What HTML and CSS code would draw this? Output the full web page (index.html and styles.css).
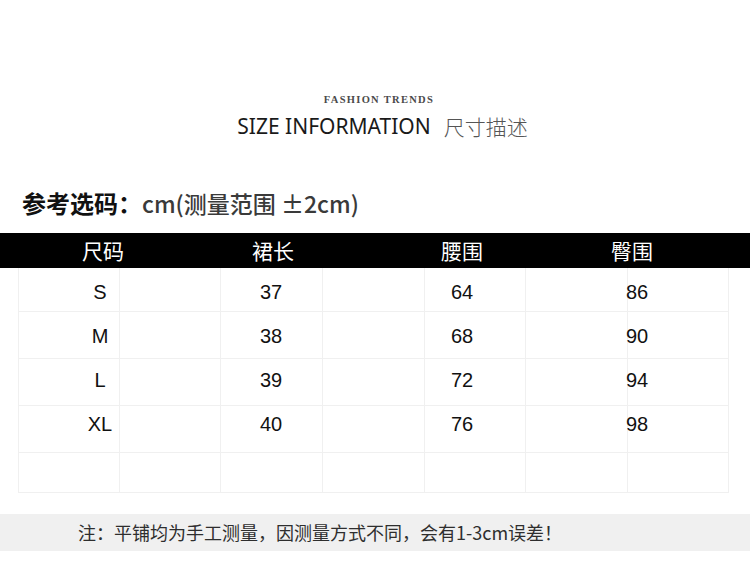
FILE: index.html
```html
<!DOCTYPE html>
<html lang="zh">
<head>
<meta charset="utf-8">
<title>Size Information</title>
<link rel="stylesheet" href="styles.css">
</head>
<body>
<div class="page">
  <div class="title">
    <div class="kicker">FASHION TRENDS</div>
    <div class="heading"><span class="en">SIZE INFORMATION</span><span class="zh">尺寸描述</span></div>
  </div>
  <div class="ref"><span class="ref-strong">参考选码：</span><span class="ref-rest">cm(测量范围 ±2cm)</span></div>
  <div class="bar">
    <div>尺码</div><div>裙长</div><div>腰围</div><div>臀围</div>
  </div>
  <div class="table">
    <div class="lines">
      <div></div><div></div><div></div><div></div><div></div><div></div><div></div>
      <div></div><div></div><div></div><div></div><div></div><div></div><div></div>
      <div></div><div></div><div></div><div></div><div></div><div></div><div></div>
      <div></div><div></div><div></div><div></div><div></div><div></div><div></div>
      <div></div><div></div><div></div><div></div><div></div><div></div><div></div>
    </div>
    <div class="data">
      <div class="row"><div>S</div><div>37</div><div>64</div><div>86</div></div>
      <div class="row"><div>M</div><div>38</div><div>68</div><div>90</div></div>
      <div class="row"><div>L</div><div>39</div><div>72</div><div>94</div></div>
      <div class="row"><div>XL</div><div>40</div><div>76</div><div>98</div></div>
    </div>
  </div>
  <div class="note">注：平铺均为手工测量，因测量方式不同，会有1-3cm误差！</div>
</div>
</body>
</html>
```

FILE: styles.css
```css
html, body {
  margin: 0;
  padding: 0;
  background: #ffffff;
}
.page {
  width: 750px;
  height: 587px;
  display: flex;
  flex-direction: column;
  font-family: "Noto Sans", "Noto Sans CJK SC", sans-serif;
}
.title {
  display: flex;
  flex-direction: column;
  align-items: center;
  padding-top: 94px;
}
.kicker {
  font-family: "Liberation Serif", serif;
  font-size: 10.5px;
  line-height: 12px;
  letter-spacing: 1.3px;
  font-weight: 700;
  color: #4a4a4a;
  margin-left: 8px;
}
.heading {
  margin-top: 6px;
  height: 28px;
  line-height: 28px;
  display: flex;
  gap: 13px;
  margin-left: 15px;
}
.heading .en {
  font-family: "Noto Sans", sans-serif;
  font-size: 21px;
  color: #1a1a1a;
}
.heading .zh {
  font-family: "Noto Sans CJK SC", sans-serif;
  font-size: 21px;
  font-weight: 300;
  color: #555555;
}
.ref {
  margin-top: 48px;
  padding-left: 22px;
  height: 30px;
  line-height: 30px;
  font-family: "Noto Sans CJK SC", sans-serif;
}
.ref-strong {
  font-size: 24px;
  font-weight: 700;
  color: #111111;
}
.ref-rest {
  font-size: 23px;
  font-weight: 500;
  color: #3a3a3a;
}
.bar {
  margin-top: 15px;
  height: 35px;
  background: #000000;
  display: grid;
  grid-template-columns: 206px 134px 244px 96px;
  align-items: center;
  color: #ffffff;
  font-family: "Noto Sans CJK SC", sans-serif;
  font-size: 21px;
  line-height: 35px;
}
.bar > div {
  text-align: center;
}
.table {
  margin-left: 18px;
  width: 710px;
  display: grid;
}
.lines, .data {
  grid-area: 1 / 1;
}
.lines {
  display: grid;
  grid-template-columns: 101px 101px 102px 102px 101px 102px 101px;
  grid-template-rows: 44px 47px 47px 47px 40px;
  border-left: 1px solid #f0f0f0;
}
.lines > div {
  border-right: 1px solid #f0f0f0;
  border-bottom: 1px solid #f0f0f0;
}
.data {
  padding-top: 2px;
  display: flex;
  flex-direction: column;
}
.row {
  height: 44px;
  display: grid;
  grid-template-columns: 164px 178px 204px 146px;
  align-items: center;
  font-family: "Liberation Sans", Arial, sans-serif;
  font-size: 20px;
  color: #111111;
}
.row > div {
  text-align: center;
}
.note {
  margin-top: 21px;
  height: 37px;
  line-height: 37px;
  background: #f0f0f0;
  padding-left: 78px;
  font-family: "Noto Sans CJK SC", sans-serif;
  font-size: 18px;
  color: #2e2e2e;
}
```
